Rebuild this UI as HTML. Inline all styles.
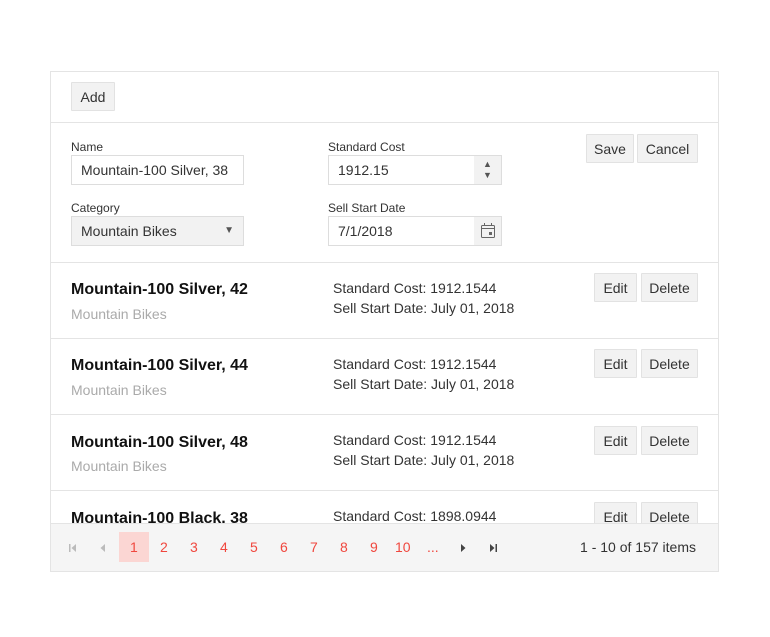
<!DOCTYPE html>
<html><head><style>
body{margin:0;width:770px;height:637px;background:#fff;font-family:"Liberation Sans",sans-serif;color:#222;position:relative;overflow:hidden}
.a{position:absolute}
.box{left:50px;top:71px;width:667px;height:499px;border:1px solid #e4e4e4;overflow:hidden}
.btn{position:absolute;background:#f2f2f2;border:1px solid #e2e2e2;font-size:14px;color:#333;text-align:center;line-height:28px;height:29px;box-sizing:border-box;border-radius:1px}
.lbl{font-size:12px;color:#333}
.inp{position:absolute;border:1px solid #ddd;height:30px;box-sizing:border-box;font-size:14px;line-height:28px;padding-left:9px;color:#333;background:#fff}
.t{font-size:16px;font-weight:bold;color:#111}
.c{font-size:14px;color:#aaa}
.d{font-size:14px;color:#333;line-height:20px}
.hr{left:0;width:667px;height:1px;background:#e4e4e4}
.pg{font-size:14px;color:#f0473e;top:15px}
</style></head><body>
<div class="a box">
 <div class="btn" style="left:20px;top:10px;width:44px">Add</div>
 <div class="a hr" style="top:50px"></div>
 <div class="a lbl" style="left:20px;top:68px">Name</div>
 <div class="inp" style="left:20px;top:83px;width:173px">Mountain-100 Silver, 38</div>
 <div class="a lbl" style="left:277px;top:68px">Standard Cost</div>
 <div class="inp" style="left:277px;top:83px;width:174px">1912.15<div class="a" style="right:0;top:0;width:27px;height:28px;background:#f2f2f2;color:#555;font-size:9px;line-height:11px;text-align:center;padding-top:3px;box-sizing:border-box">▲<br>▼</div></div>
 <div class="a lbl" style="left:20px;top:129px">Category</div>
 <div class="inp" style="left:20px;top:144px;width:173px;background:#f2f2f2">Mountain Bikes<span class="a" style="right:9px;top:0;font-size:10px;color:#555">▼</span></div>
 <div class="a lbl" style="left:277px;top:129px">Sell Start Date</div>
 <div class="inp" style="left:277px;top:144px;width:174px">7/1/2018<div class="a" style="right:0;top:0;width:27px;height:28px;background:#f2f2f2"><svg width="27" height="28"><rect x="7.5" y="8.5" width="13" height="12" rx="1" fill="none" stroke="#666"/><line x1="7.5" y1="11.5" x2="20.5" y2="11.5" stroke="#666"/><line x1="10.5" y1="6" x2="10.5" y2="9" stroke="#666"/><line x1="17.5" y1="6" x2="17.5" y2="9" stroke="#666"/><rect x="15" y="15" width="3" height="3" fill="#666"/></svg></div></div>
 <div class="btn" style="left:535px;top:62px;width:48px">Save</div>
 <div class="btn" style="left:586px;top:62px;width:61px">Cancel</div>
 <div class="a hr" style="top:190px"></div>

 <div class="a t" style="left:20px;top:209px">Mountain-100 Silver, 42</div>
 <div class="a c" style="left:20px;top:234px">Mountain Bikes</div>
 <div class="a d" style="left:282px;top:206px">Standard Cost: 1912.1544<br>Sell Start Date: July 01, 2018</div>
 <div class="btn" style="left:543px;top:201px;width:43px">Edit</div>
 <div class="btn" style="left:590px;top:201px;width:57px">Delete</div>
 <div class="a hr" style="top:266px"></div>

 <div class="a t" style="left:20px;top:285px">Mountain-100 Silver, 44</div>
 <div class="a c" style="left:20px;top:310px">Mountain Bikes</div>
 <div class="a d" style="left:282px;top:282px">Standard Cost: 1912.1544<br>Sell Start Date: July 01, 2018</div>
 <div class="btn" style="left:543px;top:277px;width:43px">Edit</div>
 <div class="btn" style="left:590px;top:277px;width:57px">Delete</div>
 <div class="a hr" style="top:342px"></div>

 <div class="a t" style="left:20px;top:362px">Mountain-100 Silver, 48</div>
 <div class="a c" style="left:20px;top:386px">Mountain Bikes</div>
 <div class="a d" style="left:282px;top:358px">Standard Cost: 1912.1544<br>Sell Start Date: July 01, 2018</div>
 <div class="btn" style="left:543px;top:354px;width:43px">Edit</div>
 <div class="btn" style="left:590px;top:354px;width:57px">Delete</div>
 <div class="a hr" style="top:418px"></div>

 <div class="a t" style="left:20px;top:438px">Mountain-100 Black, 38</div>
 <div class="a d" style="left:282px;top:434px">Standard Cost: 1898.0944</div>
 <div class="btn" style="left:543px;top:430px;width:43px">Edit</div>
 <div class="btn" style="left:590px;top:430px;width:57px">Delete</div>

 <div class="a" style="left:0;top:451px;width:667px;height:48px;background:#f5f5f5;border-top:1px solid #e4e4e4">
  <svg class="a" style="left:16px;top:18px" width="12" height="12"><rect x="2" y="2" width="1.5" height="8" fill="#bbb"/><path d="M9 2 L4.5 6 L9 10Z" fill="#bbb"/></svg>
  <svg class="a" style="left:46px;top:18px" width="12" height="12"><path d="M8 2 L3.5 6 L8 10Z" fill="#bbb"/></svg>
  <div class="a" style="left:68px;top:8px;width:30px;height:30px;background:#fbd6d3"></div>
  <div class="a pg" style="left:79px">1</div>
  <div class="a pg" style="left:109px">2</div>
  <div class="a pg" style="left:139px">3</div>
  <div class="a pg" style="left:169px">4</div>
  <div class="a pg" style="left:199px">5</div>
  <div class="a pg" style="left:229px">6</div>
  <div class="a pg" style="left:259px">7</div>
  <div class="a pg" style="left:289px">8</div>
  <div class="a pg" style="left:319px">9</div>
  <div class="a pg" style="left:344px">10</div>
  <div class="a pg" style="left:376px">...</div>
  <svg class="a" style="left:406px;top:18px" width="12" height="12"><path d="M4 2 L8.5 6 L4 10Z" fill="#444"/></svg>
  <svg class="a" style="left:436px;top:18px" width="12" height="12"><path d="M3 2 L7.5 6 L3 10Z" fill="#444"/><rect x="8.5" y="2" width="1.5" height="8" fill="#444"/></svg>
  <div class="a" style="right:22px;top:15px;font-size:14px;color:#333">1 - 10 of 157 items</div>
 </div>
</div>
</body></html>
